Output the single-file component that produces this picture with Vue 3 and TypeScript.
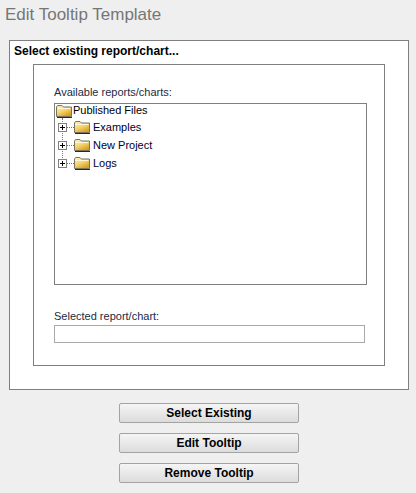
<template>
  <div class="page">
    <div class="title">Edit Tooltip Template</div>
    <div class="outer">
      <div class="legend">Select existing report/chart...</div>
      <div class="inner">
        <label class="lbl avail">Available reports/charts:</label>
        <div class="tree">
          <div class="root">
            <svg class="folder" width="16" height="14" viewBox="0 0 16 14"><use href="#fld" /></svg>
            <span class="root-name">Published Files</span>
          </div>
          <div class="vline"></div>
          <div v-for="item in items" :key="item" class="node">
            <span class="plus"></span>
            <span class="dots"></span>
            <svg class="folder" width="16" height="14" viewBox="0 0 16 14"><use href="#fld" /></svg>
            <span class="name">{{ item }}</span>
          </div>
        </div>
        <label class="lbl sel">Selected report/chart:</label>
        <input class="selected" type="text" />
      </div>
    </div>
    <div class="buttons">
      <button v-for="b in buttons" :key="b" class="btn">{{ b }}</button>
    </div>
    <svg width="0" height="0" class="defs">
      <defs>
        <linearGradient id="fg" x1="0" y1="0" x2="0.6" y2="1">
          <stop offset="0" stop-color="#fff6c8" />
          <stop offset="0.55" stop-color="#f6d36f" />
          <stop offset="1" stop-color="#d9a021" />
        </linearGradient>
        <g id="fld">
          <path d="M0.5 3 L1.5 1.5 H6 L7.5 3 H15.5 V12.5 H0.5 Z" fill="url(#fg)" stroke="#77745f" />
          <path d="M1.5 4.5 H14.5" stroke="#fff8d8" fill="none" />
          <path d="M1 13.5 H16" stroke="#2e2a1a" fill="none" />
        </g>
      </defs>
    </svg>
  </div>
</template>

<script setup lang="ts">
const items: string[] = ['Examples', 'New Project', 'Logs']
const buttons: string[] = ['Select Existing', 'Edit Tooltip', 'Remove Tooltip']
</script>

<style>
html, body {
  margin: 0;
  background: #efefef;
}
</style>

<style scoped>
.page {
  width: 416px;
  height: 493px;
  overflow: hidden;
  background: #efefef;
  font-family: "Liberation Sans", Arial, sans-serif;
  position: relative;
}
.title {
  height: 40px;
  padding: 5px 0 0 5px;
  box-sizing: border-box;
  font-size: 17px;
  line-height: 20px;
  color: #767676;
}
.outer {
  margin-left: 9px;
  width: 400px;
  height: 350px;
  box-sizing: border-box;
  border: 1px solid #7f7f7f;
  background: #fff;
  padding: 0 0 0 23px;
}
.legend {
  margin-left: -19px;
  height: 23px;
  font-size: 12px;
  font-weight: bold;
  line-height: 20px;
  color: #000;
}
.inner {
  width: 352px;
  height: 302px;
  box-sizing: border-box;
  border: 1px solid #7f7f7f;
  padding: 0 0 0 20px;
  display: flex;
  flex-direction: column;
  align-items: flex-start;
}
.lbl {
  font-size: 11px;
  line-height: 14px;
  color: #1c2b3f;
}
.avail {
  margin-top: 20px;
  margin-bottom: 4px;
}
.sel {
  margin-top: 24px;
  margin-bottom: 2px;
}
.tree {
  position: relative;
  width: 313px;
  height: 182px;
  box-sizing: border-box;
  border: 1px solid #7f7f7f;
  background: #fff;
  padding: 0;
}
.root {
  display: flex;
  align-items: flex-start;
  height: 14px;
  padding: 0 0 0 1px;
}
.root-name {
  margin-left: 1px;
  font-size: 11px;
  line-height: 13px;
  color: #000;
}
.vline {
  position: absolute;
  left: 7px;
  top: 14px;
  height: 42px;
  border-left: 1px dotted #777;
}
.node {
  position: relative;
  display: flex;
  align-items: center;
  height: 18px;
  padding-left: 3px;
}
.plus {
  position: relative;
  width: 9px;
  height: 9px;
  box-sizing: border-box;
  border: 1px solid #808080;
  background: #fff;
  flex-shrink: 0;
}
.plus::before {
  content: "";
  position: absolute;
  left: 1px;
  top: 3px;
  width: 5px;
  height: 1px;
  background: #000;
}
.plus::after {
  content: "";
  position: absolute;
  left: 3px;
  top: 1px;
  width: 1px;
  height: 5px;
  background: #000;
}
.dots {
  width: 7px;
  border-top: 1px dotted #777;
  flex-shrink: 0;
}
.name {
  margin-left: 3px;
  font-size: 11px;
  color: #000033;
}
.selected {
  width: 311px;
  height: 18px;
  box-sizing: border-box;
  border: 1px solid #a9a9a9;
  background: #fff;
  padding: 0;
  margin: 0;
  outline: none;
}
.buttons {
  margin-top: 13px;
  margin-left: 119px;
  display: flex;
  flex-direction: column;
  gap: 10px;
}
.btn {
  width: 180px;
  height: 20px;
  box-sizing: border-box;
  border: 1px solid #a3a3a3;
  border-radius: 2px;
  background: linear-gradient(to bottom, #f5f5f5, #dcdcdc);
  font-family: "Liberation Sans", Arial, sans-serif;
  font-size: 12px;
  font-weight: bold;
  color: #000;
  padding: 0;
}
.defs {
  position: absolute;
}
</style>
